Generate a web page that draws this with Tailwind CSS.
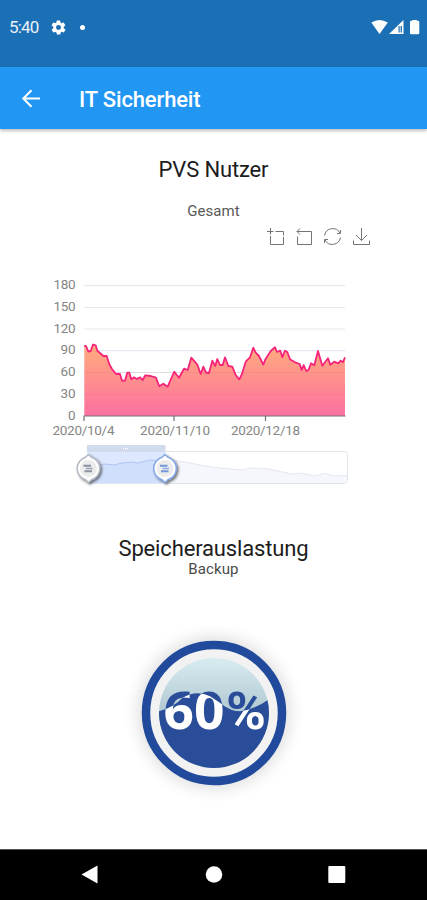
<!DOCTYPE html>
<html lang="de">
<head>
    <meta charset="UTF-8">
    <meta name="viewport" content="width=device-width, initial-scale=1.0">
    <title>IT Sicherheit</title>
    <script src="https://cdn.jsdelivr.net/npm/@tailwindcss/browser@4"></script>
</head>
<body class="bg-white font-['Roboto',sans-serif]">
    <div class="flex flex-col w-[427px] h-[900px] overflow-hidden">

        <!-- status bar -->
        <div class="h-[67px] shrink-0 bg-[#1b6fb5] flex items-start justify-between text-white">
            <div class="flex items-center h-[55px] pl-[9px]">
                <span class="text-[17px] w-[30px] tracking-[-0.8px] pt-px text-white/90">5:40</span>
                <svg class="w-[17px] h-[17px] ml-[11px]" viewBox="0 0 24 24" fill="currentColor"><path d="M19.4 13a7.500 7.500 0 0 0 0-2l2.100-1.700a.5.5 0 0 0 .1-.6l-2-3.500a.5.5 0 0 0-.6-.2l-2.500 1a7.300 7.300 0 0 0-1.700-1L14.400 2.400a.5.5 0 0 0-.5-.4h-4a.5.5 0 0 0-.5.4L9.100 5a7.700 7.700 0 0 0-1.700 1l-2.500-1a.5.5 0 0 0-.6.2l-2 3.500a.5.5 0 0 0 .1.600L4.600 11a8 8 0 0 0 0 2l-2.100 1.700a.5.5 0 0 0-.1.600l2 3.500c.1.200.4.300.6.200l2.500-1a7.300 7.300 0 0 0 1.700 1l.4 2.600c0 .2.200.4.500.4h4c.2 0 .5-.2.500-.4l.4-2.600a7.700 7.700 0 0 0 1.700-1l2.500 1c.2.100.5 0 .6-.2l2-3.500a.5.5 0 0 0-.1-.6zM12 15.500a3.500 3.500 0 1 1 0-7 3.500 3.500 0 0 1 0 7z"/></svg>
                <span class="size-[5px] rounded-full bg-white ml-[13px]"></span>
            </div>
            <svg class="w-[50px] h-[16px] mt-[19px] mr-[7px]" viewBox="370 19 50 16" fill="currentColor">
                <path d="M371.300 22.600Q379.500 17.400 387.800 22.600L379.500 34z"/>
                <path d="M389 34L403.500 20V34z"/>
                <path d="M398.500 26h3.400v6.500h-3.400z" fill="#1b6fb5"/>
                <path d="M399.700 25h.9v8h-.9z"/>
                <path d="M410 22q0-1.200 1.200-1.200h1.300V20h4.300v.8h1.300q1.200 0 1.200 1.200v11q0 1.200-1.200 1.200h-6.900q-1.200 0-1.200-1.200z"/>
            </svg>
        </div>

        <!-- app bar -->
        <div class="h-[62px] shrink-0 bg-[#2296f3] flex items-center text-white shadow-[0_2px_3px_rgba(0,0,0,0.25)] z-10">
            <svg class="w-[20px] h-[20px] ml-[21px]" viewBox="0 0 20 20" fill="none" stroke="currentColor" stroke-width="2"><path d="M19 10.500H3M10.500 2.300l-8.200 8.200 8.200 8.200"/></svg>
            <h1 class="text-[22px] font-medium ml-[38px] pt-[3px] tracking-[-0.15px]">IT Sicherheit</h1>
        </div>

        <main class="grow flex flex-col items-center text-[#1c1c1c]">
            <h2 class="text-[22px] leading-[28px] mt-[27px] tracking-[-0.15px]">PVS Nutzer</h2>
            <p class="text-[15px] leading-[20px] mt-[17px] tracking-[0.1px] text-[#5a5a5a]">Gesamt</p>

            <!-- chart tools -->
            <div class="flex self-end mr-[56px] mt-[6px] gap-[9px] text-[#747474]">
                <svg class="size-[19px]" viewBox="0 0 19 19" fill="none" stroke="currentColor"><path d="M0 4.500h6.500M3.500 1v6.500M8.500 4.500h8v4M16.500 10v7.500h-13V9"/></svg>
                <svg class="size-[19px]" viewBox="0 0 19 19" fill="none" stroke="currentColor"><path d="M5 1.500L2 4.500l3 3M2 4.500h14.500v13h-14V9.500"/></svg>
                <svg class="size-[19px]" viewBox="0 0 19 19" fill="none" stroke="currentColor"><path d="M1.500 8.500A8.300 8.300 0 0 1 17 6M17.500 10.500A8.300 8.300 0 0 1 2 13M17.500 3v3.500h-3.500M1.500 16v-3.500H5"/></svg>
                <svg class="size-[19px] ml-px" viewBox="0 0 19 19" fill="none" stroke="currentColor"><path d="M9.500 1v12.500M4 8l5.500 5.500L15 8M1.500 13.500v4h16v-4"/></svg>
            </div>

            <!-- users chart with zoom slider -->
            <svg class="w-[320px] h-[225px] mt-[24px] mr-[27px]" viewBox="40 270 320 225">
                <defs>
                    <linearGradient id="area" x1="0" y1="0" x2="0" y2="1">
                        <stop offset="0" stop-color="#ffac7c"/>
                        <stop offset="1" stop-color="#fd70a0"/>
                    </linearGradient>
                    <filter id="handle-shadow" x="-50%" y="-50%" width="200%" height="200%">
                        <feDropShadow dx="1.500" dy="1.500" stdDeviation="1.300" flood-color="#333" flood-opacity=".7"/>
                    </filter>
                </defs>
                <path d="M84 285.700H345M84 307.500H345M84 329H345M84 350.700H345M84 372.500H345M84 394.500H345" stroke="#e6eaf0" stroke-width="1.200"/>
                <path id="fill" fill="url(#area)"/>
                <path d="M84 394.500H345M84 372.500H345" stroke="#d0507a" stroke-opacity=".12"/>
                <path d="M83.500 416H345.500M84 416v5M174 416v5M265.500 416v5" stroke="#6e7079" stroke-width="1.200"/>
                <path id="line" fill="none" stroke="#f5247a" stroke-width="1.800" stroke-linejoin="round"/>
                <g fill="#858585" font-size="13.500" text-anchor="end">
                    <text x="75.500" y="289" textLength="22">180</text>
                    <text x="75.500" y="311" textLength="22">150</text>
                    <text x="75.500" y="333" textLength="22">120</text>
                    <text x="75.500" y="354.400" textLength="15">90</text>
                    <text x="75.500" y="376.400" textLength="15">60</text>
                    <text x="75.500" y="398.400" textLength="15">30</text>
                    <text x="75.500" y="420">0</text>
                </g>
                <g fill="#858585" font-size="13.500">
                    <text x="52.500" y="435" textLength="62">2020/10/4</text>
                    <text x="140" y="435" textLength="70">2020/11/10</text>
                    <text x="231" y="435" textLength="69">2020/12/18</text>
                </g>
                <rect x="87.500" y="451.500" width="260" height="32" rx="3" fill="#fff" stroke="#dfe3ec"/>
                <path d="M165 460L178 461 190 463 205 466 220 468 243 470 250 468 265 468.500 278 471 292 474 300 473 315 476 325 473.500 335 476 347 475.500V483H165z" fill="#f5f7fc"/>
                <path d="M165 460L178 461 190 463 205 466 220 468 243 470 250 468 265 468.500 278 471 292 474 300 473 315 476 325 473.500 335 476 347 475.500" fill="none" stroke="#e3e7f0"/>
                <path d="M87 445h78.500v7H87z" fill="#d2dbee"/>
                <path d="M87 452h78.500v31.500H87z" fill="#dde7fd"/>
                <path d="M88 464L100 465l4-1 10 1 8-2 10-1 6 1 12-3 15 1V483H88z" fill="#d0dffc"/>
                <path d="M100 465l4-1 10 1 8-2 10-1 6 1 12-3 12 1" fill="none" stroke="#afc5f0"/>
                <path d="M123 448.500h6" stroke="#fff" stroke-width="1.500" stroke-dasharray="1 1"/>
                <g filter="url(#handle-shadow)" fill="#fff" stroke-width="1.500">
                    <path d="M88.500 454.500l3 2.800a11.700 11.700 0 0 1 0 22.400L88.500 482.500l-3-2.800a11.700 11.700 0 0 1 0-22.400z" stroke="#b4bac4"/>
                    <path d="M165 454.500l3 2.800a11.700 11.700 0 0 1 0 22.400L165 482.500l-3-2.800a11.700 11.700 0 0 1 0-22.400z" stroke="#86a8e8"/>
                </g>
                <circle cx="88.500" cy="468.500" r="8.500" fill="#ececec"/>
                <circle cx="165" cy="468.500" r="8.500" fill="#ececec"/>
                <path d="M83.500 465.800h7.500M84.500 471.200h7.500" stroke="#8992a3" stroke-width="2"/>
                <path d="M86 468.500h6.500" stroke="#9aa2b0" stroke-width="1.500"/>
                <path d="M160 465.800h7.500M161 471.200h7.500" stroke="#7697d8" stroke-width="2"/>
                <path d="M162.500 468.500h6.500" stroke="#8faae0" stroke-width="1.500"/>
            </svg>

            <h2 class="text-[22px] leading-[26px] mt-[41px] tracking-[-0.15px]">Speicherauslastung</h2>
            <p class="text-[15px] leading-[18px] -mt-[2px] tracking-[0.1px] text-[#4a4a4a]">Backup</p>

            <!-- backup gauge -->
            <svg class="w-[180px] h-[180px] mt-[45px]" viewBox="124 622.700 180 180">
                <defs>
                    <linearGradient id="sky" x1="0" y1="0" x2="0" y2="1">
                        <stop offset="0" stop-color="#d8ecf0"/>
                        <stop offset=".5" stop-color="#b0c8d2"/>
                    </linearGradient>
                    <filter id="glow" x="-30%" y="-30%" width="160%" height="160%"><feGaussianBlur stdDeviation="8"/></filter>
                    <clipPath id="wave"><path d="M159 711Q174 707 182 698Q196 689 210 696C222 703 228 711 240 711Q255 709 269 699V770H159z"/></clipPath>
                </defs>
                <circle cx="214" cy="712.700" r="76" fill="#000" opacity=".13" filter="url(#glow)"/>
                <circle cx="214" cy="712.700" r="68" fill="#f2f2f2" stroke="#214a9c" stroke-width="8.500"/>
                <circle cx="214" cy="712.700" r="55" fill="url(#sky)"/>
                <g font-size="52" font-weight="700" fill="#294d99">
                    <text class="font-['Open_Sans',sans-serif]" x="163.500" y="729" textLength="61" lengthAdjust="spacingAndGlyphs">60</text>
                    <text x="226" y="729" textLength="40" lengthAdjust="spacingAndGlyphs">%</text>
                </g>
                <g clip-path="url(#wave)">
                    <circle cx="214" cy="712.700" r="55" fill="#294d99"/>
                    <g font-size="52" font-weight="700" fill="#fff">
                        <text class="font-['Open_Sans',sans-serif]" x="163.500" y="729" textLength="61" lengthAdjust="spacingAndGlyphs">60</text>
                        <text x="226" y="729" textLength="40" lengthAdjust="spacingAndGlyphs">%</text>
                    </g>
                </g>
            </svg>
        </main>

        <!-- navigation bar -->
        <div class="h-[51px] shrink-0 bg-black border-t border-[#555]">
            <svg class="w-full h-[50px]" viewBox="0 850 427 50" fill="#fff">
                <path d="M81.500 874.500L97.500 865.500V883.500z"/>
                <circle cx="214" cy="874.500" r="8.300"/>
                <rect x="328.300" y="866" width="17" height="17" rx="1"/>
            </svg>
        </div>
    </div>

    <script>
        const points = [
            [84.3, 346], [86, 346], [88.3, 351.5], [90.7, 351], [93, 344.5], [95.7, 345.3], [97.3, 350.7], [100, 353], [103.3, 356], [106.7, 356], [109.3, 364.3], [112, 369], [116, 374], [120, 374], [122, 380.7], [125, 380.7], [127.3, 372.7], [129.3, 372.7], [131.3, 379.3],
            [134, 377.3], [136.7, 379], [140, 377.3], [142.7, 380], [145.3, 375.3], [150.7, 376], [156, 377.7], [159.3, 386.3], [163.3, 383.7], [167.7, 386.7], [171, 379], [174.3, 371.7], [179, 377.7], [184, 368.7], [187.7, 370], [191.3, 357.7], [197.3, 364.7],
            [200.7, 374], [203.3, 366.7], [206, 372.5], [209, 373], [212.3, 360.7], [215.3, 366], [217.3, 359], [220, 365], [222.7, 365], [225, 357.3], [228.3, 366], [232.3, 366.7], [235.7, 375], [239.3, 379.3], [242, 374], [245.7, 361.7], [250, 357.3],
            [253.3, 347.7], [255.7, 352.7], [259, 356], [263.3, 364.7], [265.7, 358.7], [271, 350.7], [275, 347.3], [277, 352], [280.3, 350.7], [282.3, 357.3], [285, 350.7], [287.3, 352], [290, 359.3], [295, 362.3], [299.7, 364], [301.7, 370], [303.7, 365],
            [306.3, 371], [308.5, 370], [311, 363.3], [314.3, 365.3], [318, 351], [322.3, 365.7], [328, 358.3], [330.3, 364.7], [334.3, 361.7], [338.3, 363.3], [340.7, 360.7], [343, 362], [345, 357.3]
        ];
        const path = "M" + points.map(p => p.join(" ")).join("L");
        document.getElementById("line").setAttribute("d", path);
        document.getElementById("fill").setAttribute("d", path + "V416H84.300z");
    </script>
</body>
</html>
